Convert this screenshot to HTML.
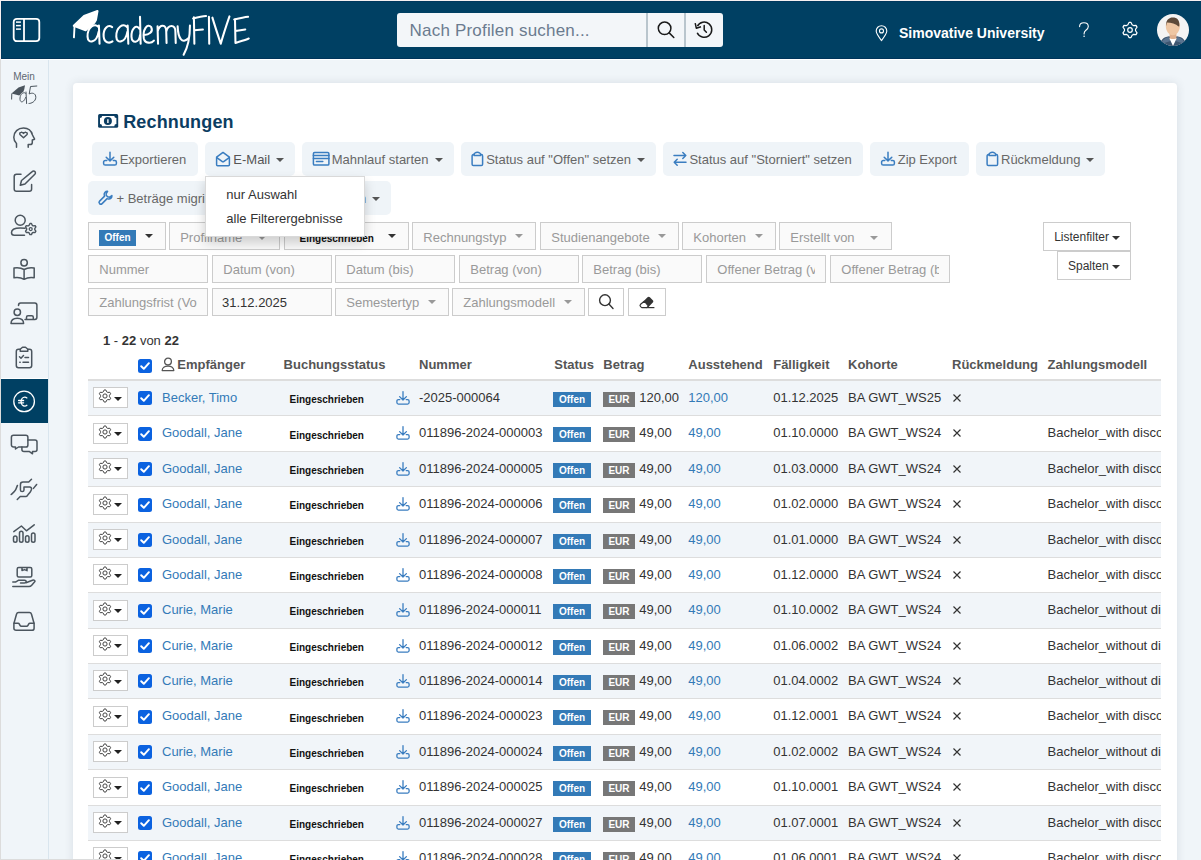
<!DOCTYPE html><html><head><meta charset="utf-8"><style>
*{box-sizing:border-box;margin:0;padding:0}
html,body{width:1201px;height:860px;overflow:hidden;background:#f0f5f9;font-family:"Liberation Sans",sans-serif}
#root{position:relative;width:1201px;height:860px;overflow:hidden;background:#f0f5f9}
.t{position:absolute;white-space:pre}
.a{position:absolute}
svg{position:absolute;overflow:visible}
.btn{position:absolute;background:#eff4f8;border-radius:5px;height:34px;top:142px}
.box{position:absolute;border:1px solid #ccc;background:#fafafa}
.caret{position:absolute;width:0;height:0;border-left:3.5px solid transparent;border-right:3.5px solid transparent;border-top:4px solid #999}
.row{position:absolute;left:88px;width:1073px;border-bottom:1px solid #ddd}
.cb{position:absolute;width:14px;height:14px;border-radius:2.5px;background:#0b62e0}
.badge{position:absolute;height:15px;color:#fff;font-weight:700;font-size:10px;line-height:15px;text-align:center}
</style></head><body><div id="root"><div class="a" style="left:0;top:0;width:1201px;height:1px;background:#f6f1f1"></div><div class="a" style="left:0;top:0;width:1px;height:59px;background:#f6f1f1"></div><div class="a" style="left:0;top:59px;width:1px;height:801px;background:#dcdcdc"></div><div class="a" style="left:1px;top:1px;width:1200px;height:58px;background:#004063;border-bottom:1px solid #00345a;border-top:1px solid #00385d;border-left:1px solid #00385d"></div><div class="a" style="left:1px;top:59px;width:1200px;height:1px;background:#fff"></div><svg style="left:12px;top:17px" width="29" height="26" viewBox="0 0 29 26"><rect x="1.7" y="1.8" width="25.6" height="22.4" rx="3.2" fill="none" stroke="#fff" stroke-width="1.8"/><line x1="12" y1="1.8" x2="12" y2="24.2" stroke="#fff" stroke-width="1.8"/><g stroke="#fff" stroke-width="1.5"><line x1="4" y1="5.1" x2="8.9" y2="5.1"/><line x1="4" y1="8.6" x2="8.9" y2="8.6"/><line x1="4" y1="12.1" x2="8.9" y2="12.1"/></g></svg><svg style="left:65px;top:5px" width="190" height="55" viewBox="0 0 1201 348"><g fill="none" stroke="#fff" stroke-width="13" stroke-linecap="round" stroke-linejoin="round">
<path d="M55 132 L120 70 L205 38 L195 95 L185 112 L130 160 Z" fill="#fff"/>
<path d="M60 130 L56 205" stroke="#fff" stroke-width="12" fill="none"/>
<path d="M212 140 C190 110 140 140 142 200 C144 250 200 240 212 170 M214 130 L218 245" />
<path d="M298 140 C270 120 240 150 244 200 C248 240 280 245 300 230" />
<path d="M392 140 C370 110 322 140 324 200 C326 250 382 240 394 170 M396 130 L400 245" />
<path d="M470 150 C450 120 418 150 420 200 C422 250 470 240 474 190 M474 75 L478 245" />
<path d="M500 190 C530 190 560 170 545 140 C520 110 490 160 498 210 C505 245 545 245 562 225" />
<path d="M585 135 L588 245 M586 165 C600 120 640 120 640 170 L642 240 M640 170 C650 120 700 120 698 170 L700 240" />
<path d="M712 135 C715 210 740 250 780 210 M790 130 C790 220 770 280 750 315" />
<path d="M815 78 L818 245 M810 85 C840 78 870 72 892 70 M818 160 L872 155" />
<path d="M910 75 L912 245" />
<path d="M932 80 C950 140 970 200 985 245 C1000 190 1020 130 1040 72" />
<path d="M1075 90 L1078 240 M1070 92 C1100 85 1130 78 1158 75 M1078 165 L1140 155 M1078 240 C1110 230 1140 222 1162 212" />
</g></svg><div class="a" style="left:397px;top:13px;width:326px;height:34px;background:#f3f6f9;border-radius:3px"></div><div class="a" style="left:646px;top:13px;width:2px;height:34px;background:#b9c5cd"></div><div class="a" style="left:684px;top:13px;width:2px;height:34px;background:#b9c5cd"></div><div class="t" style="left:409.60px;top:22.00px;font-size:17px;line-height:17px;font-weight:400;color:#6b7b8f;letter-spacing:0.19px;">Nach Profilen suchen...</div><svg style="left:656px;top:20px" width="20" height="20" viewBox="0 0 20 20"><circle cx="8.6" cy="8.3" r="6.3" fill="none" stroke="#1a1a1a" stroke-width="1.5"/><line x1="13.2" y1="12.9" x2="17.8" y2="17.5" stroke="#1a1a1a" stroke-width="1.5" stroke-linecap="round"/></svg><svg style="left:694px;top:20px" width="20" height="20" viewBox="0 0 20 20"><path d="M3.4 6.2 A7.6 7.6 0 1 1 3.2 12.8" fill="none" stroke="#1a1a1a" stroke-width="1.5"/><path d="M1.2 3.2 L2.3 8.2 L7 6.8" fill="none" stroke="#1a1a1a" stroke-width="1.5" stroke-linejoin="round"/><path d="M10.2 5.4 V10 L12.4 12.2" fill="none" stroke="#1a1a1a" stroke-width="1.5" stroke-linecap="round"/></svg><svg style="left:875px;top:25px" width="14" height="17" viewBox="0 0 14 17"><path d="M6.5 15.5 C3.5 11.5 1.2 8.6 1.2 6 A5.3 5.3 0 0 1 11.8 6 C11.8 8.6 9.5 11.5 6.5 15.5 Z" fill="none" stroke="#fff" stroke-width="1.1"/><circle cx="6.5" cy="5.9" r="2" fill="none" stroke="#fff" stroke-width="1.1"/></svg><div class="t" style="left:899.00px;top:26.00px;font-size:14px;line-height:14px;font-weight:700;color:#fff;">Simovative University</div><svg style="left:1077px;top:21px" width="14" height="18" viewBox="0 0 14 18"><path d="M2.6 5.6 C2.6 3.2 4.4 1.8 6.9 1.8 C9.5 1.8 11.3 3.3 11.3 5.5 C11.3 7.4 10.2 8.3 8.9 9.3 C7.7 10.2 7.1 11 7.1 12.6 V13" fill="none" stroke="#fff" stroke-width="1.1" stroke-linecap="round"/><circle cx="7.1" cy="15.3" r="0.8" fill="#fff"/></svg><svg style="left:1121px;top:21px" width="18" height="18" viewBox="0 0 18 18"><path d="M8.01 1.47 L9.99 1.47 L11.14 3.83 L12.41 4.56 L15.03 4.37 L16.02 6.09 L14.55 8.27 L14.55 9.73 L16.02 11.91 L15.03 13.63 L12.41 13.44 L11.14 14.17 L9.99 16.53 L8.01 16.53 L6.86 14.17 L5.59 13.44 L2.97 13.63 L1.98 11.91 L3.45 9.73 L3.45 8.27 L1.98 6.09 L2.97 4.37 L5.59 4.56 L6.86 3.83 Z" fill="none" stroke="#fff" stroke-width="1.2" stroke-linejoin="round"/><circle cx="9" cy="9" r="2.3" fill="none" stroke="#fff" stroke-width="1.2"/></svg><svg style="left:1157px;top:14px" width="32" height="32" viewBox="0 0 32 32"><defs><clipPath id="av"><circle cx="16" cy="16" r="16"/></clipPath></defs><g clip-path="url(#av)"><rect width="32" height="32" fill="#f4f4f4"/><path d="M2.5 33 C3 26 6 23.2 12 22.2 L16 23.5 L20 22.2 C26 23.2 29 26 29.5 33 Z" fill="#3e5670"/><path d="M4 30 C5 26 7.5 24 11.5 23 L13.5 27 Z M28 30 C27 26 24.5 24 20.5 23 L18.5 27 Z" fill="#5b7591"/><rect x="12.6" y="18.5" width="6.8" height="7" fill="#dfb08e"/><path d="M12.3 24.3 L16 32 L19.7 24.3 C18.5 25.2 13.5 25.2 12.3 24.3 Z" fill="#fff"/><path d="M8.8 12 C8.8 7.5 11.8 5.5 15.8 5.5 C19.8 5.5 22.9 7.5 22.9 12 C22.9 17 19.8 21.2 15.8 21.2 C11.8 21.2 8.8 17 8.8 12 Z" fill="#eec6a3"/><path d="M9 12.3 C8.6 6.2 12 3.6 15.8 3.6 C20 3.6 23 6 22.3 12.2 L21.6 12.4 C19 10 14 8.6 9.8 8.6 Z" fill="#5c4939"/></g></svg><div class="a" style="left:1px;top:60px;width:47px;height:800px;background:#f0f5f9"></div><div class="a" style="left:48px;top:60px;width:1px;height:800px;background:#d9e5ee"></div><div class="t" style="left:13.20px;top:72.00px;font-size:10px;line-height:10px;font-weight:400;color:#5d6770;">Mein</div><svg style="left:10px;top:84px" width="28" height="21" viewBox="0 0 28 21"><path d="M1.5 9.5 L8.5 3.5 L15 1.2 L14.2 5.5 L13.5 7.2 L9.3 11.5 Z" fill="#4b555e"/><path d="M1.8 9.5 L1.6 15.5" stroke="#4b555e" stroke-width="1" fill="none"/><g fill="none" stroke="#4b555e" stroke-width="1" stroke-linecap="round"><path d="M15.8 9.5 C14.5 7.5 10.5 9 10 14 C9.6 19 13.5 19.5 15.6 13.5 M16 8 L16.6 19.5"/><path d="M26.8 2 L20.5 2.5 L19.2 10 C21.5 8.5 26 8.8 25.8 13.5 C25.6 17.5 21.5 19.5 19 19.5"/></g></svg><svg style="left:12px;top:126px" width="24" height="24" viewBox="0 0 24 24"><g fill="none" stroke="#4b555e" stroke-width="1.5" stroke-linecap="round" stroke-linejoin="round"><path d="M4.5 21.2 V17.5 C2.6 15.8 1.8 13.6 1.8 11.2 C1.8 6 6 2 11.5 2 C16.2 2 19.5 5.2 20.5 9 L22.6 13.2 L20.3 14 V16.5 C20.3 17.8 19.4 18.6 18 18.6 H16.2 V21.2"/><path d="M11.5 11.8 L8.2 8.8 C7.3 7.8 7.8 6.4 9 6.2 C10 6 10.9 6.6 11.5 7.4 C12.1 6.6 13 6 14 6.2 C15.2 6.4 15.7 7.8 14.8 8.8 Z"/></g></svg><svg style="left:12px;top:169px" width="24" height="24" viewBox="0 0 24 24"><g fill="none" stroke="#4b555e" stroke-width="1.5" stroke-linecap="round" stroke-linejoin="round"><path d="M9 5.2 H4.5 C3.1 5.2 2.2 6.1 2.2 7.5 V20 C2.2 21.4 3.1 22.3 4.5 22.3 H17.3 C18.7 22.3 19.6 21.4 19.6 20 V15.5"/><path d="M20.2 2.6 C21 1.8 22.2 1.8 22.9 2.6 C23.6 3.3 23.6 4.5 22.8 5.3 L13 15 L8.3 16.2 L9.5 11.5 Z"/></g></svg><svg style="left:10px;top:213px" width="28" height="25" viewBox="0 0 28 25"><g fill="none" stroke="#4b555e" stroke-width="1.5" stroke-linecap="round" stroke-linejoin="round"><circle cx="10.2" cy="7.3" r="5"/><path d="M15 15.3 C13.8 15 12.2 14.9 10.2 14.9 C4.5 14.9 1.5 16.6 1.5 19.5 C1.5 21.2 2.3 22.3 4.2 22.3 H14.5"/></g><path d="M19.97 10.55 L21.43 10.55 L22.27 12.31 L23.20 12.85 L25.14 12.69 L25.87 13.96 L24.76 15.56 L24.76 16.64 L25.87 18.24 L25.14 19.51 L23.20 19.35 L22.27 19.89 L21.43 21.65 L19.97 21.65 L19.13 19.89 L18.20 19.35 L16.26 19.51 L15.53 18.24 L16.64 16.64 L16.64 15.56 L15.53 13.96 L16.26 12.69 L18.20 12.85 L19.13 12.31 Z" fill="none" stroke="#4b555e" stroke-width="1.4" stroke-linejoin="round"/><circle cx="20.7" cy="16.1" r="1.5" fill="none" stroke="#4b555e" stroke-width="1.3"/></svg><svg style="left:12px;top:257px" width="25" height="25" viewBox="0 0 25 25"><g fill="none" stroke="#4b555e" stroke-width="1.5" stroke-linecap="round" stroke-linejoin="round"><circle cx="12.1" cy="5.8" r="3.2"/><path d="M12.1 22.3 C9.5 20.8 5.6 20.3 2 20.8 V11 C5.6 10.5 9.5 11 12.1 12.5 C14.7 11 18.6 10.5 22.2 11 V20.8 C18.6 20.3 14.7 20.8 12.1 22.3 Z M12.1 12.5 V22.3"/></g></svg><svg style="left:9px;top:301px" width="30" height="25" viewBox="0 0 30 25"><g fill="none" stroke="#4b555e" stroke-width="1.5" stroke-linecap="round" stroke-linejoin="round"><path d="M9.5 4.5 C9.5 2.9 10.2 2 11.6 2 H25.8 C27.2 2 27.9 2.9 27.9 4.3 V16.2 C27.9 17.6 27.2 18.4 25.8 18.4 H16"/><path d="M17.5 18.3 V16.2 C17.5 15.3 18.1 14.8 19 14.8 H22.8 C23.7 14.8 24.3 15.3 24.3 16.2 V18.3"/><circle cx="8.3" cy="11.2" r="3.2"/><path d="M2 22.6 C2 19.2 4.5 17.3 8.3 17.3 C12.1 17.3 14.6 19.2 14.6 22.6 Z"/></g></svg><svg style="left:12px;top:345px" width="24" height="25" viewBox="0 0 24 25"><g fill="none" stroke="#4b555e" stroke-width="1.5" stroke-linecap="round" stroke-linejoin="round"><path d="M8.2 4.2 H6.5 C5.1 4.2 4.3 5 4.3 6.4 V20.6 C4.3 22 5.1 22.7 6.5 22.7 H17.5 C18.9 22.7 19.7 22 19.7 20.6 V6.4 C19.7 5 18.9 4.2 17.5 4.2 H15.8"/><path d="M8.2 6.3 V4.2 L10.5 2.2 H13.5 L15.8 4.2 V6.3 Z"/><path d="M7.5 11.8 L9 13.2 L11.5 10.6 M13 12.5 H16.5 M7.8 17.2 H8.2 M11 17.2 H16.5"/></g></svg><div class="a" style="left:1px;top:378px;width:47px;height:1px;background:#fff"></div><div class="a" style="left:1px;top:379px;width:47px;height:44px;background:#004063"></div><svg style="left:12px;top:389px" width="25" height="25" viewBox="0 0 25 25"><circle cx="12.1" cy="12.4" r="10.3" fill="none" stroke="#fff" stroke-width="1.3"/><path d="M14.9 8.9 C14.3 8.4 13.6 8.1 12.8 8.1 C10.7 8.1 9.1 10.1 9.1 12.6 C9.1 15.1 10.7 17.1 12.8 17.1 C13.6 17.1 14.3 16.8 14.9 16.3 M6.6 11.5 H11.6 M6.6 13.8 H11.6" fill="none" stroke="#fff" stroke-width="1.3" stroke-linecap="round"/></svg><svg style="left:10px;top:433px" width="29" height="24" viewBox="0 0 29 24"><g fill="none" stroke="#4b555e" stroke-width="1.5" stroke-linecap="round" stroke-linejoin="round"><path d="M3.5 2.3 H15.8 C17 2.3 17.9 3.2 17.9 4.4 V11.9 C17.9 13.1 17 14 15.8 14 H8.5 L5.5 16 V14 H3.5 C2.3 14 1.4 13.1 1.4 11.9 V4.4 C1.4 3.2 2.3 2.3 3.5 2.3 Z"/><path d="M17.9 7 H25 C26.2 7 27 7.8 27 9 V16.6 C27 17.8 26.2 18.6 25 18.6 H22.5 V20.8 L19.5 18.6 H14 C12.8 18.6 11.9 17.8 11.9 16.6 V14"/></g></svg><svg style="left:10px;top:477px" width="28" height="25" viewBox="0 0 28 25"><g fill="none" stroke="#4b555e" stroke-width="1.5" stroke-linecap="round" stroke-linejoin="round"><path d="M1.14 17.53 C3 15.8 4.6 14.6 5.4 13.2 C6.2 11.8 6.8 9.8 7.46 8.44"/><path d="M21.49 2.31 L18.73 5.08 H13 C11.3 5.08 10.43 6 10.43 7.65 V12.98 C10.43 14 11.2 14.6 12.2 14.6 C13.2 14.6 13.98 14 13.98 12.98 V10.02 H19.72 C21 10.1 21.8 11.2 21.49 12.39 C21.2 13.6 20.5 14.5 20.1 15.16 L18.13 17.53 C17.5 18.6 17 19.5 16.16 19.5 H10.23 L7.26 22.47"/><path d="M26.63 7.45 L23.47 11.4"/></g></svg><svg style="left:11px;top:521px" width="26" height="24" viewBox="0 0 26 24"><g fill="none" stroke="#4b555e" stroke-width="1.5" stroke-linecap="round" stroke-linejoin="round"><path d="M2.8 10.6 L10.4 5 L15.4 9.8 L23.2 3.8"/><rect x="2.5" y="15" width="3.5" height="6.2" rx="1.75"/><rect x="8.5" y="10.2" width="3.5" height="11" rx="1.75"/><rect x="14.5" y="14.8" width="3.5" height="6.4" rx="1.75"/><rect x="20.5" y="12" width="3.5" height="9.2" rx="1.75"/></g></svg><svg style="left:11px;top:565px" width="26" height="24" viewBox="0 0 26 24"><g fill="none" stroke="#4b555e" stroke-width="1.5" stroke-linecap="round" stroke-linejoin="round"><rect x="6.2" y="2.5" width="14.6" height="9.4" rx="1.5"/><path d="M11 2.7 V5.6 L13.5 4.6 L16 5.6 V2.7"/><path d="M1.8 17.1 H4.5 L7.7 15.2 H13.5 C14.6 15.2 15.2 15.8 15.2 16.6 C15.2 17.4 14.6 17.9 13.5 17.9 H9.5 M15 17.8 L21.5 15.3 C23 14.8 24.4 15.4 23.9 16.6 L20.7 20.3 C19.9 21.2 19 21.6 18 21.6 H1.8"/></g></svg><svg style="left:11px;top:609px" width="26" height="24" viewBox="0 0 26 24"><g fill="none" stroke="#4b555e" stroke-width="1.5" stroke-linecap="round" stroke-linejoin="round"><path d="M7.6 3.6 H18.4 C19.6 3.6 20.2 4.2 20.5 5.3 L23.1 14.5 V19.2 C23.1 20.6 22.3 21.3 20.9 21.3 H5.1 C3.7 21.3 2.9 20.6 2.9 19.2 V14.5 L5.5 5.3 C5.8 4.2 6.4 3.6 7.6 3.6 Z"/><path d="M3 14.2 H7 C7.7 14.2 8.1 14.6 8.4 15.2 L9 16.4 C9.3 17 9.7 17.3 10.4 17.3 H15.6 C16.3 17.3 16.7 17 17 16.4 L17.6 15.2 C17.9 14.6 18.3 14.2 19 14.2 H23"/></g></svg><div class="a" style="left:73px;top:83px;width:1104px;height:800px;background:#fff;border-radius:4px;box-shadow:0 0 10px rgba(50,60,70,0.12)"></div><svg style="left:97px;top:113px" width="22" height="16" viewBox="0 0 22 16"><rect x="1.1" y="1.1" width="20.1" height="13.7" rx="1.6" fill="#0b3d62"/><path d="M5.1 2.9 H17.3 A2.1 2.1 0 0 0 19.4 5 V11.1 A2.1 2.1 0 0 0 17.3 13.2 H5.1 A2.1 2.1 0 0 0 3 11.1 V5 A2.1 2.1 0 0 0 5.1 2.9 Z" fill="#fff"/><circle cx="10.9" cy="8" r="4" fill="#0b3d62"/><path d="M10.2 6.3 H11.6 V9.9 H10.2 Z" fill="#fff"/></svg><div class="t" style="left:123.20px;top:113.00px;font-size:18px;line-height:18px;font-weight:700;color:#0b3d62;letter-spacing:0.15px;">Rechnungen</div><div class="a" style="left:92px;top:142px;width:106px;height:34px;background:#eff4f8;border-radius:5px"></div><div class="a" style="left:205px;top:142px;width:90px;height:34px;background:#eff4f8;border-radius:5px"></div><div class="a" style="left:302px;top:142px;width:152px;height:34px;background:#eff4f8;border-radius:5px"></div><div class="a" style="left:461px;top:142px;width:195px;height:34px;background:#eff4f8;border-radius:5px"></div><div class="a" style="left:663px;top:142px;width:200px;height:34px;background:#eff4f8;border-radius:5px"></div><div class="a" style="left:870px;top:142px;width:99px;height:34px;background:#eff4f8;border-radius:5px"></div><div class="a" style="left:976px;top:142px;width:129px;height:34px;background:#eff4f8;border-radius:5px"></div><div class="a" style="left:88px;top:181px;width:303px;height:34px;background:#eff4f8;border-radius:5px"></div><svg style="left:101px;top:151px" width="16" height="16" viewBox="0 0 16 16"><g fill="none" stroke="#3a7dc0" stroke-width="1.5" stroke-linecap="round" stroke-linejoin="round"><path d="M9 1.2 V9.8 M5.2 6.2 L9 9.9 L12.8 6.2"/><path d="M5.8 9.5 H4.3 C3.2 9.5 2.6 10.1 2.6 11.1 V12.5 C2.6 13.5 3.2 14.1 4.3 14.1 H13.8 C14.8 14.1 15.4 13.5 15.4 12.5 V11.1 C15.4 10.1 14.8 9.5 13.8 9.5 H12.3"/></g></svg><div class="t" style="left:119.70px;top:153.00px;font-size:13px;line-height:13px;font-weight:400;color:#676767;">Exportieren</div><svg style="left:215px;top:151px" width="16" height="16" viewBox="0 0 16 16"><g fill="none" stroke="#3a7dc0" stroke-width="1.5" stroke-linecap="round" stroke-linejoin="round"><path d="M1.6 6.2 L8 1.4 L14.4 6.2 V13.8 C14.4 14.4 14 14.8 13.4 14.8 H2.6 C2 14.8 1.6 14.4 1.6 13.8 Z"/><path d="M1.8 6.6 L7 10.4 C7.6 10.9 8.4 10.9 9 10.4 L14.2 6.6"/></g></svg><div class="t" style="left:233.30px;top:153.00px;font-size:13px;line-height:13px;font-weight:400;color:#555;">E-Mail</div><svg style="left:276px;top:158px" width="8" height="4" viewBox="0 0 8 4"><path d="M0 0 H8 L4.0 4 Z" fill="#555"/></svg><svg style="left:312px;top:151px" width="18" height="16" viewBox="0 0 18 16"><g fill="none" stroke="#3a7dc0" stroke-width="1.5" stroke-linecap="round" stroke-linejoin="round"><rect x="1.4" y="1.6" width="15.5" height="12.5" rx="1.2"/><path d="M1.4 4.5 H16.9 M1.4 7.4 H16.9 M4.4 10.6 H10.8"/></g></svg><div class="t" style="left:331.70px;top:153.00px;font-size:13px;line-height:13px;font-weight:400;color:#676767;">Mahnlauf starten</div><svg style="left:435px;top:158px" width="8" height="4" viewBox="0 0 8 4"><path d="M0 0 H8 L4.0 4 Z" fill="#555"/></svg><svg style="left:471px;top:151px" width="13" height="16" viewBox="0 0 13 16"><g fill="none" stroke="#3a7dc0" stroke-width="1.5" stroke-linecap="round" stroke-linejoin="round"><path d="M3 3.6 H2.4 C1.6 3.6 1.1 4.1 1.1 4.9 V13.2 C1.1 14 1.6 14.5 2.4 14.5 H10.3 C11.1 14.5 11.6 14 11.6 13.2 V4.9 C11.6 4.1 11.1 3.6 10.3 3.6 H9.7"/><path d="M3 3.6 C3 2.6 4.5 1.3 6.35 1.3 C8.2 1.3 9.7 2.6 9.7 3.6 V4.6 H3 Z"/></g></svg><div class="t" style="left:486.20px;top:153.00px;font-size:13px;line-height:13px;font-weight:400;color:#676767;">Status auf "Offen" setzen</div><svg style="left:637px;top:158px" width="8" height="4" viewBox="0 0 8 4"><path d="M0 0 H8 L4.0 4 Z" fill="#555"/></svg><svg style="left:672px;top:151px" width="16" height="16" viewBox="0 0 16 16"><g fill="none" stroke="#3a7dc0" stroke-width="1.5" stroke-linecap="round" stroke-linejoin="round"><path d="M2 4.5 H13.8 M10.8 1.5 L13.8 4.5 L10.8 7.5"/><path d="M14 11.3 H2.2 M5.2 8.3 L2.2 11.3 L5.2 14.3"/></g></svg><div class="t" style="left:689.40px;top:153.00px;font-size:13px;line-height:13px;font-weight:400;color:#676767;">Status auf "Storniert" setzen</div><svg style="left:879px;top:151px" width="16" height="16" viewBox="0 0 16 16"><g fill="none" stroke="#3a7dc0" stroke-width="1.5" stroke-linecap="round" stroke-linejoin="round"><path d="M9 1.2 V9.8 M5.2 6.2 L9 9.9 L12.8 6.2"/><path d="M5.8 9.5 H4.3 C3.2 9.5 2.6 10.1 2.6 11.1 V12.5 C2.6 13.5 3.2 14.1 4.3 14.1 H13.8 C14.8 14.1 15.4 13.5 15.4 12.5 V11.1 C15.4 10.1 14.8 9.5 13.8 9.5 H12.3"/></g></svg><div class="t" style="left:897.70px;top:153.00px;font-size:13px;line-height:13px;font-weight:400;color:#676767;">Zip Export</div><svg style="left:986px;top:151px" width="13" height="16" viewBox="0 0 13 16"><g fill="none" stroke="#3a7dc0" stroke-width="1.5" stroke-linecap="round" stroke-linejoin="round"><path d="M3 3.6 H2.4 C1.6 3.6 1.1 4.1 1.1 4.9 V13.2 C1.1 14 1.6 14.5 2.4 14.5 H10.3 C11.1 14.5 11.6 14 11.6 13.2 V4.9 C11.6 4.1 11.1 3.6 10.3 3.6 H9.7"/><path d="M3 3.6 C3 2.6 4.5 1.3 6.35 1.3 C8.2 1.3 9.7 2.6 9.7 3.6 V4.6 H3 Z"/></g></svg><div class="t" style="left:1001.00px;top:153.00px;font-size:13px;line-height:13px;font-weight:400;color:#676767;">Rückmeldung</div><svg style="left:1086px;top:158px" width="8" height="4" viewBox="0 0 8 4"><path d="M0 0 H8 L4.0 4 Z" fill="#555"/></svg><svg style="left:98px;top:190px" width="16" height="16" viewBox="0 0 16 16"><g fill="none" stroke="#3a7dc0" stroke-width="1.5" stroke-linecap="round" stroke-linejoin="round"><path d="M9.6 1.3 C7.6 1 5.9 2.8 6.2 4.8 C6.3 5.3 6.4 5.7 6.6 6.1 L1.6 11.1 C0.9 11.8 0.9 12.9 1.6 13.6 C2.3 14.3 3.4 14.3 4.1 13.6 L9.1 8.6 C9.5 8.8 9.9 8.9 10.4 9 C12.4 9.3 14.2 7.6 13.9 5.6 L11.6 7.2 L9.6 6.8 L8.2 5.3 L8.2 3.6 Z"/></g></svg><div class="t" style="left:116.50px;top:192.00px;font-size:13px;line-height:13px;font-weight:400;color:#676767;">+ Beträge migrieren</div><div class="t" style="left:359.00px;top:192.00px;font-size:13px;line-height:13px;font-weight:400;color:#676767;">n</div><svg style="left:372px;top:197px" width="8" height="4" viewBox="0 0 8 4"><path d="M0 0 H8 L4.0 4 Z" fill="#555"/></svg><div class="a" style="left:88px;top:222px;width:78px;height:28px;border:1px solid #ccc;background:#fafafa"></div><div class="badge" style="left:99px;top:230px;width:37px;height:16px;background:#337ab7;line-height:16px">Offen</div><svg style="left:145px;top:234px" width="8" height="4" viewBox="0 0 8 4"><path d="M0 0 H8 L4.0 4 Z" fill="#333"/></svg><div class="a" style="left:169px;top:222px;width:111px;height:28px;border:1px solid #ccc;background:#fafafa"></div><div class="t" style="left:180.20px;top:231.00px;font-size:13px;line-height:13px;font-weight:400;color:#999;">Profilname</div><svg style="left:258px;top:236px" width="8" height="4" viewBox="0 0 8 4"><path d="M0 0 H8 L4.0 4 Z" fill="#999"/></svg><div class="a" style="left:284px;top:222px;width:125px;height:28px;border:1px solid #ccc;background:#fafafa"></div><div class="t" style="left:299.50px;top:234.00px;font-size:10px;line-height:10px;font-weight:700;color:#111;">Eingeschrieben</div><svg style="left:388px;top:234px" width="8" height="4" viewBox="0 0 8 4"><path d="M0 0 H8 L4.0 4 Z" fill="#333"/></svg><div class="a" style="left:412px;top:222px;width:124px;height:28px;border:1px solid #ccc;background:#fafafa"></div><div class="t" style="left:423.30px;top:231.00px;font-size:13px;line-height:13px;font-weight:400;color:#999;">Rechnungstyp</div><svg style="left:515px;top:234px" width="8" height="4" viewBox="0 0 8 4"><path d="M0 0 H8 L4.0 4 Z" fill="#999"/></svg><div class="a" style="left:540px;top:222px;width:139px;height:28px;border:1px solid #ccc;background:#fafafa"></div><div class="t" style="left:551.30px;top:231.00px;font-size:13px;line-height:13px;font-weight:400;color:#999;">Studienangebote</div><svg style="left:658px;top:234px" width="8" height="4" viewBox="0 0 8 4"><path d="M0 0 H8 L4.0 4 Z" fill="#999"/></svg><div class="a" style="left:682px;top:222px;width:94px;height:28px;border:1px solid #ccc;background:#fafafa"></div><div class="t" style="left:693.30px;top:231.00px;font-size:13px;line-height:13px;font-weight:400;color:#999;">Kohorten</div><svg style="left:755px;top:234px" width="8" height="4" viewBox="0 0 8 4"><path d="M0 0 H8 L4.0 4 Z" fill="#999"/></svg><div class="a" style="left:779px;top:222px;width:113px;height:28px;border:1px solid #ccc;background:#fafafa"></div><div class="t" style="left:790.30px;top:231.00px;font-size:13px;line-height:13px;font-weight:400;color:#999;">Erstellt von</div><svg style="left:870px;top:236px" width="8" height="4" viewBox="0 0 8 4"><path d="M0 0 H8 L4.0 4 Z" fill="#999"/></svg><div class="a" style="left:88px;top:255px;width:120px;height:28px;border:1px solid #ccc;background:#fafafa"></div><div class="a" style="left:89px;top:256px;width:107.5px;height:25px;overflow:hidden"><div class="t" style="left:10.3px;top:7px;font-size:13px;line-height:13px;color:#999">Nummer</div></div><div class="a" style="left:212px;top:255px;width:120px;height:28px;border:1px solid #ccc;background:#fafafa"></div><div class="a" style="left:213px;top:256px;width:107.5px;height:25px;overflow:hidden"><div class="t" style="left:10.3px;top:7px;font-size:13px;line-height:13px;color:#999">Datum (von)</div></div><div class="a" style="left:335px;top:255px;width:120px;height:28px;border:1px solid #ccc;background:#fafafa"></div><div class="a" style="left:336px;top:256px;width:107.5px;height:25px;overflow:hidden"><div class="t" style="left:10.3px;top:7px;font-size:13px;line-height:13px;color:#999">Datum (bis)</div></div><div class="a" style="left:459px;top:255px;width:120px;height:28px;border:1px solid #ccc;background:#fafafa"></div><div class="a" style="left:460px;top:256px;width:107.5px;height:25px;overflow:hidden"><div class="t" style="left:10.3px;top:7px;font-size:13px;line-height:13px;color:#999">Betrag (von)</div></div><div class="a" style="left:582px;top:255px;width:120px;height:28px;border:1px solid #ccc;background:#fafafa"></div><div class="a" style="left:583px;top:256px;width:107.5px;height:25px;overflow:hidden"><div class="t" style="left:10.3px;top:7px;font-size:13px;line-height:13px;color:#999">Betrag (bis)</div></div><div class="a" style="left:706px;top:255px;width:120px;height:28px;border:1px solid #ccc;background:#fafafa"></div><div class="a" style="left:707px;top:256px;width:107.5px;height:25px;overflow:hidden"><div class="t" style="left:10.3px;top:7px;font-size:13px;line-height:13px;color:#999">Offener Betrag (v</div></div><div class="a" style="left:830px;top:255px;width:120px;height:28px;border:1px solid #ccc;background:#fafafa"></div><div class="a" style="left:831px;top:256px;width:107.5px;height:25px;overflow:hidden"><div class="t" style="left:10.3px;top:7px;font-size:13px;line-height:13px;color:#999">Offener Betrag (b</div></div><div class="a" style="left:88px;top:288px;width:120px;height:28px;border:1px solid #ccc;background:#fafafa"></div><div class="a" style="left:89px;top:289px;width:107.5px;height:25px;overflow:hidden"><div class="t" style="left:10.3px;top:7px;font-size:13px;line-height:13px;color:#999">Zahlungsfrist (Von)</div></div><div class="a" style="left:212px;top:288px;width:120px;height:28px;border:1px solid #ccc;background:#fafafa"></div><div class="t" style="left:222.00px;top:296.00px;font-size:13px;line-height:13px;font-weight:400;color:#333;">31.12.2025</div><div class="a" style="left:335px;top:288px;width:114px;height:28px;border:1px solid #ccc;background:#fafafa"></div><div class="t" style="left:346.30px;top:296.00px;font-size:13px;line-height:13px;font-weight:400;color:#999;">Semestertyp</div><svg style="left:428px;top:300px" width="8" height="4" viewBox="0 0 8 4"><path d="M0 0 H8 L4.0 4 Z" fill="#999"/></svg><div class="a" style="left:452px;top:288px;width:133px;height:28px;border:1px solid #ccc;background:#fafafa"></div><div class="t" style="left:463.30px;top:296.00px;font-size:13px;line-height:13px;font-weight:400;color:#999;">Zahlungsmodell</div><svg style="left:564px;top:300px" width="8" height="4" viewBox="0 0 8 4"><path d="M0 0 H8 L4.0 4 Z" fill="#999"/></svg><div class="a" style="left:588px;top:288px;width:36px;height:28px;border:1px solid #ccc;background:#fff"></div><svg style="left:597px;top:292px" width="18" height="18" viewBox="0 0 18 18"><circle cx="8" cy="8.2" r="5.4" fill="none" stroke="#333" stroke-width="1.4"/><line x1="11.9" y1="12.1" x2="16" y2="16.4" stroke="#333" stroke-width="1.4" stroke-linecap="round"/></svg><div class="a" style="left:628px;top:288px;width:38px;height:28px;border:1px solid #ccc;background:#fff"></div><svg style="left:638px;top:294px" width="18" height="16" viewBox="0 0 18 16"><path d="M2.6 10.2 L9.5 3.3 C10.2 2.6 11.2 2.6 11.9 3.3 L14.8 6.2 C15.5 6.9 15.5 7.9 14.8 8.6 L10.5 12.9" fill="#333"/><path d="M2.6 10.2 C1.9 10.9 1.9 11.9 2.6 12.6 L3.8 13.6 H8.8 L10.5 12 L6.3 7.2 Z" fill="#fff" stroke="#333" stroke-width="1.2" stroke-linejoin="round"/><path d="M8.5 13.6 H16.4" stroke="#333" stroke-width="1.2"/></svg><div class="a" style="left:1043px;top:222px;width:88px;height:29px;border:1px solid #ccc;background:#fff"></div><div class="t" style="left:1054.20px;top:231.00px;font-size:12px;line-height:12px;font-weight:400;color:#333;">Listenfilter</div><svg style="left:1112px;top:236px" width="8" height="4" viewBox="0 0 8 4"><path d="M0 0 H8 L4.0 4 Z" fill="#333"/></svg><div class="a" style="left:1057px;top:251px;width:74px;height:29px;border:1px solid #ccc;background:#fff"></div><div class="t" style="left:1068.00px;top:260.00px;font-size:12px;line-height:12px;font-weight:400;color:#333;">Spalten</div><svg style="left:1112px;top:265px" width="8" height="4" viewBox="0 0 8 4"><path d="M0 0 H8 L4.0 4 Z" fill="#333"/></svg><div class="t" style="left:103px;top:334px;font-size:13px;line-height:13px;color:#333"><b>1</b> - <b>22</b> von <b>22</b></div><svg style="left:138px;top:359px" width="14" height="14" viewBox="0 0 14 14"><rect width="14" height="14" rx="2.5" fill="#0b62e0"/><path d="M3.2 7.2 L5.8 9.8 L10.9 4.2" fill="none" stroke="#fff" stroke-width="2" stroke-linecap="round" stroke-linejoin="round"/></svg><svg style="left:161px;top:357px" width="14" height="15" viewBox="0 0 14 15"><circle cx="7" cy="4.6" r="3.4" fill="none" stroke="#555" stroke-width="1.3"/><path d="M1.2 13.6 C1.2 10.4 3.6 9.2 7 9.2 C10.4 9.2 12.8 10.4 12.8 13.6 Z" fill="none" stroke="#555" stroke-width="1.3" stroke-linejoin="round"/></svg><div class="t" style="left:177.30px;top:358.00px;font-size:13px;line-height:13px;font-weight:700;color:#555;">Empfänger</div><div class="t" style="left:283.60px;top:358.00px;font-size:13px;line-height:13px;font-weight:700;color:#555;">Buchungsstatus</div><div class="t" style="left:419.00px;top:358.00px;font-size:13px;line-height:13px;font-weight:700;color:#555;">Nummer</div><div class="t" style="left:554.30px;top:358.00px;font-size:13px;line-height:13px;font-weight:700;color:#555;">Status</div><div class="t" style="left:603.30px;top:358.00px;font-size:13px;line-height:13px;font-weight:700;color:#555;">Betrag</div><div class="t" style="left:688.30px;top:358.00px;font-size:13px;line-height:13px;font-weight:700;color:#555;">Ausstehend</div><div class="t" style="left:773.20px;top:358.00px;font-size:13px;line-height:13px;font-weight:700;color:#555;">Fälligkeit</div><div class="t" style="left:848.00px;top:358.00px;font-size:13px;line-height:13px;font-weight:700;color:#555;">Kohorte</div><div class="t" style="left:952.00px;top:358.00px;font-size:13px;line-height:13px;font-weight:700;color:#555;">Rückmeldung</div><div class="t" style="left:1047.50px;top:358.00px;font-size:13px;line-height:13px;font-weight:700;color:#555;">Zahlungsmodell</div><div class="a" style="left:88px;top:379px;width:1073px;height:2px;background:#ddd"></div><div class="a" style="left:88px;top:381px;width:1073px;height:479px;overflow:hidden"><div class="a" style="left:0;top:0.000px;width:1073px;height:35.380px;background:#f1f5f9;border-bottom:1px solid #ddd"></div><div class="a" style="left:5px;top:6.450px;width:35px;height:21px;border:1px solid #ccc;background:#fff"></div><svg style="left:10px;top:8.400px" width="14" height="14" viewBox="0 0 14 14"><path d="M6.20 0.95 L7.80 0.95 L8.72 2.84 L9.74 3.43 L11.84 3.29 L12.64 4.67 L11.46 6.41 L11.46 7.59 L12.64 9.33 L11.84 10.71 L9.74 10.57 L8.72 11.16 L7.80 13.05 L6.20 13.05 L5.28 11.16 L4.26 10.57 L2.16 10.71 L1.36 9.33 L2.54 7.59 L2.54 6.41 L1.36 4.67 L2.16 3.29 L4.26 3.43 L5.28 2.84 Z" fill="none" stroke="#3a3a3a" stroke-width="0.95" stroke-linejoin="round"/><circle cx="7" cy="7" r="2.1" fill="none" stroke="#3a3a3a" stroke-width="0.95"/></svg><svg style="left:26px;top:15.600px" width="8" height="4" viewBox="0 0 8 4"><path d="M0 0 H8 L4 4 Z" fill="#222"/></svg><svg style="left:50px;top:10.450px" width="14" height="14" viewBox="0 0 14 14"><rect width="14" height="14" rx="2.5" fill="#0b62e0"/><path d="M3.2 7.2 L5.8 9.8 L10.9 4.2" fill="none" stroke="#fff" stroke-width="2" stroke-linecap="round" stroke-linejoin="round"/></svg><div class="t" style="left:74.00px;top:10.000px;font-size:13px;line-height:13px;font-weight:400;color:#337ab7;">Becker, Timo</div><div class="t" style="left:201.50px;top:14.200px;font-size:10px;line-height:10px;font-weight:700;color:#111;">Eingeschrieben</div><svg style="left:306px;top:9.000px" width="16" height="16" viewBox="0 0 16 16"><g fill="none" stroke="#3a7dc0" stroke-width="1.3" stroke-linecap="round" stroke-linejoin="round"><path d="M9 1.6 V10 M5.6 6.6 L9 10 L12.4 6.6"/><path d="M5.8 9.6 H4.4 C3.5 9.6 2.9 10.2 2.9 11.1 V12.6 C2.9 13.5 3.5 14.1 4.4 14.1 H13.6 C14.5 14.1 15.1 13.5 15.1 12.6 V11.1 C15.1 10.2 14.5 9.6 13.6 9.6 H12.2"/></g></svg><div class="t" style="left:331.00px;top:10.000px;font-size:13px;line-height:13px;font-weight:400;color:#333;">-2025-000064</div><div class="badge" style="left:465px;top:11.000px;width:38px;background:#337ab7;line-height:16px">Offen</div><div class="badge" style="left:515px;top:11.000px;width:32px;background:#777;line-height:16px">EUR</div><div class="t" style="left:551.30px;top:10.000px;font-size:13px;line-height:13px;font-weight:400;color:#333;">120,00</div><div class="t" style="left:600.30px;top:10.000px;font-size:13px;line-height:13px;font-weight:400;color:#337ab7;">120,00</div><div class="t" style="left:685.20px;top:10.000px;font-size:13px;line-height:13px;font-weight:400;color:#333;">01.12.2025</div><div class="t" style="left:760.00px;top:10.000px;font-size:13px;line-height:13px;font-weight:400;color:#333;">BA GWT_WS25</div><svg style="left:864px;top:12.000px" width="10" height="10" viewBox="0 0 10 10"><path d="M1.5 1.5 L8.5 8.5 M8.5 1.5 L1.5 8.5" stroke="#333" stroke-width="1.15"/></svg><div class="a" style="left:0;top:35.380px;width:1073px;height:35.380px;background:#fff;border-bottom:1px solid #ddd"></div><div class="a" style="left:5px;top:41.830px;width:35px;height:21px;border:1px solid #ccc;background:#fff"></div><svg style="left:10px;top:43.780px" width="14" height="14" viewBox="0 0 14 14"><path d="M6.20 0.95 L7.80 0.95 L8.72 2.84 L9.74 3.43 L11.84 3.29 L12.64 4.67 L11.46 6.41 L11.46 7.59 L12.64 9.33 L11.84 10.71 L9.74 10.57 L8.72 11.16 L7.80 13.05 L6.20 13.05 L5.28 11.16 L4.26 10.57 L2.16 10.71 L1.36 9.33 L2.54 7.59 L2.54 6.41 L1.36 4.67 L2.16 3.29 L4.26 3.43 L5.28 2.84 Z" fill="none" stroke="#3a3a3a" stroke-width="0.95" stroke-linejoin="round"/><circle cx="7" cy="7" r="2.1" fill="none" stroke="#3a3a3a" stroke-width="0.95"/></svg><svg style="left:26px;top:50.980px" width="8" height="4" viewBox="0 0 8 4"><path d="M0 0 H8 L4 4 Z" fill="#222"/></svg><svg style="left:50px;top:45.830px" width="14" height="14" viewBox="0 0 14 14"><rect width="14" height="14" rx="2.5" fill="#0b62e0"/><path d="M3.2 7.2 L5.8 9.8 L10.9 4.2" fill="none" stroke="#fff" stroke-width="2" stroke-linecap="round" stroke-linejoin="round"/></svg><div class="t" style="left:74.00px;top:45.380px;font-size:13px;line-height:13px;font-weight:400;color:#337ab7;">Goodall, Jane</div><div class="t" style="left:201.50px;top:49.580px;font-size:10px;line-height:10px;font-weight:700;color:#111;">Eingeschrieben</div><svg style="left:306px;top:44.380px" width="16" height="16" viewBox="0 0 16 16"><g fill="none" stroke="#3a7dc0" stroke-width="1.3" stroke-linecap="round" stroke-linejoin="round"><path d="M9 1.6 V10 M5.6 6.6 L9 10 L12.4 6.6"/><path d="M5.8 9.6 H4.4 C3.5 9.6 2.9 10.2 2.9 11.1 V12.6 C2.9 13.5 3.5 14.1 4.4 14.1 H13.6 C14.5 14.1 15.1 13.5 15.1 12.6 V11.1 C15.1 10.2 14.5 9.6 13.6 9.6 H12.2"/></g></svg><div class="t" style="left:331.00px;top:45.380px;font-size:13px;line-height:13px;font-weight:400;color:#333;">011896-2024-000003</div><div class="badge" style="left:465px;top:46.380px;width:38px;background:#337ab7;line-height:16px">Offen</div><div class="badge" style="left:515px;top:46.380px;width:32px;background:#777;line-height:16px">EUR</div><div class="t" style="left:551.30px;top:45.380px;font-size:13px;line-height:13px;font-weight:400;color:#333;">49,00</div><div class="t" style="left:600.30px;top:45.380px;font-size:13px;line-height:13px;font-weight:400;color:#337ab7;">49,00</div><div class="t" style="left:685.20px;top:45.380px;font-size:13px;line-height:13px;font-weight:400;color:#333;">01.10.0000</div><div class="t" style="left:760.00px;top:45.380px;font-size:13px;line-height:13px;font-weight:400;color:#333;">BA GWT_WS24</div><svg style="left:864px;top:47.380px" width="10" height="10" viewBox="0 0 10 10"><path d="M1.5 1.5 L8.5 8.5 M8.5 1.5 L1.5 8.5" stroke="#333" stroke-width="1.15"/></svg><div class="t" style="left:959.50px;top:45.380px;font-size:13px;line-height:13px;font-weight:400;color:#333;">Bachelor_with discount</div><div class="a" style="left:0;top:70.760px;width:1073px;height:35.380px;background:#f1f5f9;border-bottom:1px solid #ddd"></div><div class="a" style="left:5px;top:77.210px;width:35px;height:21px;border:1px solid #ccc;background:#fff"></div><svg style="left:10px;top:79.160px" width="14" height="14" viewBox="0 0 14 14"><path d="M6.20 0.95 L7.80 0.95 L8.72 2.84 L9.74 3.43 L11.84 3.29 L12.64 4.67 L11.46 6.41 L11.46 7.59 L12.64 9.33 L11.84 10.71 L9.74 10.57 L8.72 11.16 L7.80 13.05 L6.20 13.05 L5.28 11.16 L4.26 10.57 L2.16 10.71 L1.36 9.33 L2.54 7.59 L2.54 6.41 L1.36 4.67 L2.16 3.29 L4.26 3.43 L5.28 2.84 Z" fill="none" stroke="#3a3a3a" stroke-width="0.95" stroke-linejoin="round"/><circle cx="7" cy="7" r="2.1" fill="none" stroke="#3a3a3a" stroke-width="0.95"/></svg><svg style="left:26px;top:86.360px" width="8" height="4" viewBox="0 0 8 4"><path d="M0 0 H8 L4 4 Z" fill="#222"/></svg><svg style="left:50px;top:81.210px" width="14" height="14" viewBox="0 0 14 14"><rect width="14" height="14" rx="2.5" fill="#0b62e0"/><path d="M3.2 7.2 L5.8 9.8 L10.9 4.2" fill="none" stroke="#fff" stroke-width="2" stroke-linecap="round" stroke-linejoin="round"/></svg><div class="t" style="left:74.00px;top:80.760px;font-size:13px;line-height:13px;font-weight:400;color:#337ab7;">Goodall, Jane</div><div class="t" style="left:201.50px;top:84.960px;font-size:10px;line-height:10px;font-weight:700;color:#111;">Eingeschrieben</div><svg style="left:306px;top:79.760px" width="16" height="16" viewBox="0 0 16 16"><g fill="none" stroke="#3a7dc0" stroke-width="1.3" stroke-linecap="round" stroke-linejoin="round"><path d="M9 1.6 V10 M5.6 6.6 L9 10 L12.4 6.6"/><path d="M5.8 9.6 H4.4 C3.5 9.6 2.9 10.2 2.9 11.1 V12.6 C2.9 13.5 3.5 14.1 4.4 14.1 H13.6 C14.5 14.1 15.1 13.5 15.1 12.6 V11.1 C15.1 10.2 14.5 9.6 13.6 9.6 H12.2"/></g></svg><div class="t" style="left:331.00px;top:80.760px;font-size:13px;line-height:13px;font-weight:400;color:#333;">011896-2024-000005</div><div class="badge" style="left:465px;top:81.760px;width:38px;background:#337ab7;line-height:16px">Offen</div><div class="badge" style="left:515px;top:81.760px;width:32px;background:#777;line-height:16px">EUR</div><div class="t" style="left:551.30px;top:80.760px;font-size:13px;line-height:13px;font-weight:400;color:#333;">49,00</div><div class="t" style="left:600.30px;top:80.760px;font-size:13px;line-height:13px;font-weight:400;color:#337ab7;">49,00</div><div class="t" style="left:685.20px;top:80.760px;font-size:13px;line-height:13px;font-weight:400;color:#333;">01.03.0000</div><div class="t" style="left:760.00px;top:80.760px;font-size:13px;line-height:13px;font-weight:400;color:#333;">BA GWT_WS24</div><svg style="left:864px;top:82.760px" width="10" height="10" viewBox="0 0 10 10"><path d="M1.5 1.5 L8.5 8.5 M8.5 1.5 L1.5 8.5" stroke="#333" stroke-width="1.15"/></svg><div class="t" style="left:959.50px;top:80.760px;font-size:13px;line-height:13px;font-weight:400;color:#333;">Bachelor_with discount</div><div class="a" style="left:0;top:106.140px;width:1073px;height:35.380px;background:#fff;border-bottom:1px solid #ddd"></div><div class="a" style="left:5px;top:112.590px;width:35px;height:21px;border:1px solid #ccc;background:#fff"></div><svg style="left:10px;top:114.540px" width="14" height="14" viewBox="0 0 14 14"><path d="M6.20 0.95 L7.80 0.95 L8.72 2.84 L9.74 3.43 L11.84 3.29 L12.64 4.67 L11.46 6.41 L11.46 7.59 L12.64 9.33 L11.84 10.71 L9.74 10.57 L8.72 11.16 L7.80 13.05 L6.20 13.05 L5.28 11.16 L4.26 10.57 L2.16 10.71 L1.36 9.33 L2.54 7.59 L2.54 6.41 L1.36 4.67 L2.16 3.29 L4.26 3.43 L5.28 2.84 Z" fill="none" stroke="#3a3a3a" stroke-width="0.95" stroke-linejoin="round"/><circle cx="7" cy="7" r="2.1" fill="none" stroke="#3a3a3a" stroke-width="0.95"/></svg><svg style="left:26px;top:121.740px" width="8" height="4" viewBox="0 0 8 4"><path d="M0 0 H8 L4 4 Z" fill="#222"/></svg><svg style="left:50px;top:116.590px" width="14" height="14" viewBox="0 0 14 14"><rect width="14" height="14" rx="2.5" fill="#0b62e0"/><path d="M3.2 7.2 L5.8 9.8 L10.9 4.2" fill="none" stroke="#fff" stroke-width="2" stroke-linecap="round" stroke-linejoin="round"/></svg><div class="t" style="left:74.00px;top:116.140px;font-size:13px;line-height:13px;font-weight:400;color:#337ab7;">Goodall, Jane</div><div class="t" style="left:201.50px;top:120.340px;font-size:10px;line-height:10px;font-weight:700;color:#111;">Eingeschrieben</div><svg style="left:306px;top:115.140px" width="16" height="16" viewBox="0 0 16 16"><g fill="none" stroke="#3a7dc0" stroke-width="1.3" stroke-linecap="round" stroke-linejoin="round"><path d="M9 1.6 V10 M5.6 6.6 L9 10 L12.4 6.6"/><path d="M5.8 9.6 H4.4 C3.5 9.6 2.9 10.2 2.9 11.1 V12.6 C2.9 13.5 3.5 14.1 4.4 14.1 H13.6 C14.5 14.1 15.1 13.5 15.1 12.6 V11.1 C15.1 10.2 14.5 9.6 13.6 9.6 H12.2"/></g></svg><div class="t" style="left:331.00px;top:116.140px;font-size:13px;line-height:13px;font-weight:400;color:#333;">011896-2024-000006</div><div class="badge" style="left:465px;top:117.140px;width:38px;background:#337ab7;line-height:16px">Offen</div><div class="badge" style="left:515px;top:117.140px;width:32px;background:#777;line-height:16px">EUR</div><div class="t" style="left:551.30px;top:116.140px;font-size:13px;line-height:13px;font-weight:400;color:#333;">49,00</div><div class="t" style="left:600.30px;top:116.140px;font-size:13px;line-height:13px;font-weight:400;color:#337ab7;">49,00</div><div class="t" style="left:685.20px;top:116.140px;font-size:13px;line-height:13px;font-weight:400;color:#333;">01.02.0000</div><div class="t" style="left:760.00px;top:116.140px;font-size:13px;line-height:13px;font-weight:400;color:#333;">BA GWT_WS24</div><svg style="left:864px;top:118.140px" width="10" height="10" viewBox="0 0 10 10"><path d="M1.5 1.5 L8.5 8.5 M8.5 1.5 L1.5 8.5" stroke="#333" stroke-width="1.15"/></svg><div class="t" style="left:959.50px;top:116.140px;font-size:13px;line-height:13px;font-weight:400;color:#333;">Bachelor_with discount</div><div class="a" style="left:0;top:141.520px;width:1073px;height:35.380px;background:#f1f5f9;border-bottom:1px solid #ddd"></div><div class="a" style="left:5px;top:147.970px;width:35px;height:21px;border:1px solid #ccc;background:#fff"></div><svg style="left:10px;top:149.920px" width="14" height="14" viewBox="0 0 14 14"><path d="M6.20 0.95 L7.80 0.95 L8.72 2.84 L9.74 3.43 L11.84 3.29 L12.64 4.67 L11.46 6.41 L11.46 7.59 L12.64 9.33 L11.84 10.71 L9.74 10.57 L8.72 11.16 L7.80 13.05 L6.20 13.05 L5.28 11.16 L4.26 10.57 L2.16 10.71 L1.36 9.33 L2.54 7.59 L2.54 6.41 L1.36 4.67 L2.16 3.29 L4.26 3.43 L5.28 2.84 Z" fill="none" stroke="#3a3a3a" stroke-width="0.95" stroke-linejoin="round"/><circle cx="7" cy="7" r="2.1" fill="none" stroke="#3a3a3a" stroke-width="0.95"/></svg><svg style="left:26px;top:157.120px" width="8" height="4" viewBox="0 0 8 4"><path d="M0 0 H8 L4 4 Z" fill="#222"/></svg><svg style="left:50px;top:151.970px" width="14" height="14" viewBox="0 0 14 14"><rect width="14" height="14" rx="2.5" fill="#0b62e0"/><path d="M3.2 7.2 L5.8 9.8 L10.9 4.2" fill="none" stroke="#fff" stroke-width="2" stroke-linecap="round" stroke-linejoin="round"/></svg><div class="t" style="left:74.00px;top:151.520px;font-size:13px;line-height:13px;font-weight:400;color:#337ab7;">Goodall, Jane</div><div class="t" style="left:201.50px;top:155.720px;font-size:10px;line-height:10px;font-weight:700;color:#111;">Eingeschrieben</div><svg style="left:306px;top:150.520px" width="16" height="16" viewBox="0 0 16 16"><g fill="none" stroke="#3a7dc0" stroke-width="1.3" stroke-linecap="round" stroke-linejoin="round"><path d="M9 1.6 V10 M5.6 6.6 L9 10 L12.4 6.6"/><path d="M5.8 9.6 H4.4 C3.5 9.6 2.9 10.2 2.9 11.1 V12.6 C2.9 13.5 3.5 14.1 4.4 14.1 H13.6 C14.5 14.1 15.1 13.5 15.1 12.6 V11.1 C15.1 10.2 14.5 9.6 13.6 9.6 H12.2"/></g></svg><div class="t" style="left:331.00px;top:151.520px;font-size:13px;line-height:13px;font-weight:400;color:#333;">011896-2024-000007</div><div class="badge" style="left:465px;top:152.520px;width:38px;background:#337ab7;line-height:16px">Offen</div><div class="badge" style="left:515px;top:152.520px;width:32px;background:#777;line-height:16px">EUR</div><div class="t" style="left:551.30px;top:151.520px;font-size:13px;line-height:13px;font-weight:400;color:#333;">49,00</div><div class="t" style="left:600.30px;top:151.520px;font-size:13px;line-height:13px;font-weight:400;color:#337ab7;">49,00</div><div class="t" style="left:685.20px;top:151.520px;font-size:13px;line-height:13px;font-weight:400;color:#333;">01.01.0000</div><div class="t" style="left:760.00px;top:151.520px;font-size:13px;line-height:13px;font-weight:400;color:#333;">BA GWT_WS24</div><svg style="left:864px;top:153.520px" width="10" height="10" viewBox="0 0 10 10"><path d="M1.5 1.5 L8.5 8.5 M8.5 1.5 L1.5 8.5" stroke="#333" stroke-width="1.15"/></svg><div class="t" style="left:959.50px;top:151.520px;font-size:13px;line-height:13px;font-weight:400;color:#333;">Bachelor_with discount</div><div class="a" style="left:0;top:176.900px;width:1073px;height:35.380px;background:#fff;border-bottom:1px solid #ddd"></div><div class="a" style="left:5px;top:183.350px;width:35px;height:21px;border:1px solid #ccc;background:#fff"></div><svg style="left:10px;top:185.300px" width="14" height="14" viewBox="0 0 14 14"><path d="M6.20 0.95 L7.80 0.95 L8.72 2.84 L9.74 3.43 L11.84 3.29 L12.64 4.67 L11.46 6.41 L11.46 7.59 L12.64 9.33 L11.84 10.71 L9.74 10.57 L8.72 11.16 L7.80 13.05 L6.20 13.05 L5.28 11.16 L4.26 10.57 L2.16 10.71 L1.36 9.33 L2.54 7.59 L2.54 6.41 L1.36 4.67 L2.16 3.29 L4.26 3.43 L5.28 2.84 Z" fill="none" stroke="#3a3a3a" stroke-width="0.95" stroke-linejoin="round"/><circle cx="7" cy="7" r="2.1" fill="none" stroke="#3a3a3a" stroke-width="0.95"/></svg><svg style="left:26px;top:192.500px" width="8" height="4" viewBox="0 0 8 4"><path d="M0 0 H8 L4 4 Z" fill="#222"/></svg><svg style="left:50px;top:187.350px" width="14" height="14" viewBox="0 0 14 14"><rect width="14" height="14" rx="2.5" fill="#0b62e0"/><path d="M3.2 7.2 L5.8 9.8 L10.9 4.2" fill="none" stroke="#fff" stroke-width="2" stroke-linecap="round" stroke-linejoin="round"/></svg><div class="t" style="left:74.00px;top:186.900px;font-size:13px;line-height:13px;font-weight:400;color:#337ab7;">Goodall, Jane</div><div class="t" style="left:201.50px;top:191.100px;font-size:10px;line-height:10px;font-weight:700;color:#111;">Eingeschrieben</div><svg style="left:306px;top:185.900px" width="16" height="16" viewBox="0 0 16 16"><g fill="none" stroke="#3a7dc0" stroke-width="1.3" stroke-linecap="round" stroke-linejoin="round"><path d="M9 1.6 V10 M5.6 6.6 L9 10 L12.4 6.6"/><path d="M5.8 9.6 H4.4 C3.5 9.6 2.9 10.2 2.9 11.1 V12.6 C2.9 13.5 3.5 14.1 4.4 14.1 H13.6 C14.5 14.1 15.1 13.5 15.1 12.6 V11.1 C15.1 10.2 14.5 9.6 13.6 9.6 H12.2"/></g></svg><div class="t" style="left:331.00px;top:186.900px;font-size:13px;line-height:13px;font-weight:400;color:#333;">011896-2024-000008</div><div class="badge" style="left:465px;top:187.900px;width:38px;background:#337ab7;line-height:16px">Offen</div><div class="badge" style="left:515px;top:187.900px;width:32px;background:#777;line-height:16px">EUR</div><div class="t" style="left:551.30px;top:186.900px;font-size:13px;line-height:13px;font-weight:400;color:#333;">49,00</div><div class="t" style="left:600.30px;top:186.900px;font-size:13px;line-height:13px;font-weight:400;color:#337ab7;">49,00</div><div class="t" style="left:685.20px;top:186.900px;font-size:13px;line-height:13px;font-weight:400;color:#333;">01.12.0000</div><div class="t" style="left:760.00px;top:186.900px;font-size:13px;line-height:13px;font-weight:400;color:#333;">BA GWT_WS24</div><svg style="left:864px;top:188.900px" width="10" height="10" viewBox="0 0 10 10"><path d="M1.5 1.5 L8.5 8.5 M8.5 1.5 L1.5 8.5" stroke="#333" stroke-width="1.15"/></svg><div class="t" style="left:959.50px;top:186.900px;font-size:13px;line-height:13px;font-weight:400;color:#333;">Bachelor_with discount</div><div class="a" style="left:0;top:212.280px;width:1073px;height:35.380px;background:#f1f5f9;border-bottom:1px solid #ddd"></div><div class="a" style="left:5px;top:218.730px;width:35px;height:21px;border:1px solid #ccc;background:#fff"></div><svg style="left:10px;top:220.680px" width="14" height="14" viewBox="0 0 14 14"><path d="M6.20 0.95 L7.80 0.95 L8.72 2.84 L9.74 3.43 L11.84 3.29 L12.64 4.67 L11.46 6.41 L11.46 7.59 L12.64 9.33 L11.84 10.71 L9.74 10.57 L8.72 11.16 L7.80 13.05 L6.20 13.05 L5.28 11.16 L4.26 10.57 L2.16 10.71 L1.36 9.33 L2.54 7.59 L2.54 6.41 L1.36 4.67 L2.16 3.29 L4.26 3.43 L5.28 2.84 Z" fill="none" stroke="#3a3a3a" stroke-width="0.95" stroke-linejoin="round"/><circle cx="7" cy="7" r="2.1" fill="none" stroke="#3a3a3a" stroke-width="0.95"/></svg><svg style="left:26px;top:227.880px" width="8" height="4" viewBox="0 0 8 4"><path d="M0 0 H8 L4 4 Z" fill="#222"/></svg><svg style="left:50px;top:222.730px" width="14" height="14" viewBox="0 0 14 14"><rect width="14" height="14" rx="2.5" fill="#0b62e0"/><path d="M3.2 7.2 L5.8 9.8 L10.9 4.2" fill="none" stroke="#fff" stroke-width="2" stroke-linecap="round" stroke-linejoin="round"/></svg><div class="t" style="left:74.00px;top:222.280px;font-size:13px;line-height:13px;font-weight:400;color:#337ab7;">Curie, Marie</div><div class="t" style="left:201.50px;top:226.480px;font-size:10px;line-height:10px;font-weight:700;color:#111;">Eingeschrieben</div><svg style="left:306px;top:221.280px" width="16" height="16" viewBox="0 0 16 16"><g fill="none" stroke="#3a7dc0" stroke-width="1.3" stroke-linecap="round" stroke-linejoin="round"><path d="M9 1.6 V10 M5.6 6.6 L9 10 L12.4 6.6"/><path d="M5.8 9.6 H4.4 C3.5 9.6 2.9 10.2 2.9 11.1 V12.6 C2.9 13.5 3.5 14.1 4.4 14.1 H13.6 C14.5 14.1 15.1 13.5 15.1 12.6 V11.1 C15.1 10.2 14.5 9.6 13.6 9.6 H12.2"/></g></svg><div class="t" style="left:331.00px;top:222.280px;font-size:13px;line-height:13px;font-weight:400;color:#333;">011896-2024-000011</div><div class="badge" style="left:465px;top:223.280px;width:38px;background:#337ab7;line-height:16px">Offen</div><div class="badge" style="left:515px;top:223.280px;width:32px;background:#777;line-height:16px">EUR</div><div class="t" style="left:551.30px;top:222.280px;font-size:13px;line-height:13px;font-weight:400;color:#333;">49,00</div><div class="t" style="left:600.30px;top:222.280px;font-size:13px;line-height:13px;font-weight:400;color:#337ab7;">49,00</div><div class="t" style="left:685.20px;top:222.280px;font-size:13px;line-height:13px;font-weight:400;color:#333;">01.10.0002</div><div class="t" style="left:760.00px;top:222.280px;font-size:13px;line-height:13px;font-weight:400;color:#333;">BA GWT_WS24</div><svg style="left:864px;top:224.280px" width="10" height="10" viewBox="0 0 10 10"><path d="M1.5 1.5 L8.5 8.5 M8.5 1.5 L1.5 8.5" stroke="#333" stroke-width="1.15"/></svg><div class="t" style="left:959.50px;top:222.280px;font-size:13px;line-height:13px;font-weight:400;color:#333;">Bachelor_without discount</div><div class="a" style="left:0;top:247.660px;width:1073px;height:35.380px;background:#fff;border-bottom:1px solid #ddd"></div><div class="a" style="left:5px;top:254.110px;width:35px;height:21px;border:1px solid #ccc;background:#fff"></div><svg style="left:10px;top:256.060px" width="14" height="14" viewBox="0 0 14 14"><path d="M6.20 0.95 L7.80 0.95 L8.72 2.84 L9.74 3.43 L11.84 3.29 L12.64 4.67 L11.46 6.41 L11.46 7.59 L12.64 9.33 L11.84 10.71 L9.74 10.57 L8.72 11.16 L7.80 13.05 L6.20 13.05 L5.28 11.16 L4.26 10.57 L2.16 10.71 L1.36 9.33 L2.54 7.59 L2.54 6.41 L1.36 4.67 L2.16 3.29 L4.26 3.43 L5.28 2.84 Z" fill="none" stroke="#3a3a3a" stroke-width="0.95" stroke-linejoin="round"/><circle cx="7" cy="7" r="2.1" fill="none" stroke="#3a3a3a" stroke-width="0.95"/></svg><svg style="left:26px;top:263.260px" width="8" height="4" viewBox="0 0 8 4"><path d="M0 0 H8 L4 4 Z" fill="#222"/></svg><svg style="left:50px;top:258.110px" width="14" height="14" viewBox="0 0 14 14"><rect width="14" height="14" rx="2.5" fill="#0b62e0"/><path d="M3.2 7.2 L5.8 9.8 L10.9 4.2" fill="none" stroke="#fff" stroke-width="2" stroke-linecap="round" stroke-linejoin="round"/></svg><div class="t" style="left:74.00px;top:257.660px;font-size:13px;line-height:13px;font-weight:400;color:#337ab7;">Curie, Marie</div><div class="t" style="left:201.50px;top:261.860px;font-size:10px;line-height:10px;font-weight:700;color:#111;">Eingeschrieben</div><svg style="left:306px;top:256.660px" width="16" height="16" viewBox="0 0 16 16"><g fill="none" stroke="#3a7dc0" stroke-width="1.3" stroke-linecap="round" stroke-linejoin="round"><path d="M9 1.6 V10 M5.6 6.6 L9 10 L12.4 6.6"/><path d="M5.8 9.6 H4.4 C3.5 9.6 2.9 10.2 2.9 11.1 V12.6 C2.9 13.5 3.5 14.1 4.4 14.1 H13.6 C14.5 14.1 15.1 13.5 15.1 12.6 V11.1 C15.1 10.2 14.5 9.6 13.6 9.6 H12.2"/></g></svg><div class="t" style="left:331.00px;top:257.660px;font-size:13px;line-height:13px;font-weight:400;color:#333;">011896-2024-000012</div><div class="badge" style="left:465px;top:258.660px;width:38px;background:#337ab7;line-height:16px">Offen</div><div class="badge" style="left:515px;top:258.660px;width:32px;background:#777;line-height:16px">EUR</div><div class="t" style="left:551.30px;top:257.660px;font-size:13px;line-height:13px;font-weight:400;color:#333;">49,00</div><div class="t" style="left:600.30px;top:257.660px;font-size:13px;line-height:13px;font-weight:400;color:#337ab7;">49,00</div><div class="t" style="left:685.20px;top:257.660px;font-size:13px;line-height:13px;font-weight:400;color:#333;">01.06.0002</div><div class="t" style="left:760.00px;top:257.660px;font-size:13px;line-height:13px;font-weight:400;color:#333;">BA GWT_WS24</div><svg style="left:864px;top:259.660px" width="10" height="10" viewBox="0 0 10 10"><path d="M1.5 1.5 L8.5 8.5 M8.5 1.5 L1.5 8.5" stroke="#333" stroke-width="1.15"/></svg><div class="t" style="left:959.50px;top:257.660px;font-size:13px;line-height:13px;font-weight:400;color:#333;">Bachelor_without discount</div><div class="a" style="left:0;top:283.040px;width:1073px;height:35.380px;background:#f1f5f9;border-bottom:1px solid #ddd"></div><div class="a" style="left:5px;top:289.490px;width:35px;height:21px;border:1px solid #ccc;background:#fff"></div><svg style="left:10px;top:291.440px" width="14" height="14" viewBox="0 0 14 14"><path d="M6.20 0.95 L7.80 0.95 L8.72 2.84 L9.74 3.43 L11.84 3.29 L12.64 4.67 L11.46 6.41 L11.46 7.59 L12.64 9.33 L11.84 10.71 L9.74 10.57 L8.72 11.16 L7.80 13.05 L6.20 13.05 L5.28 11.16 L4.26 10.57 L2.16 10.71 L1.36 9.33 L2.54 7.59 L2.54 6.41 L1.36 4.67 L2.16 3.29 L4.26 3.43 L5.28 2.84 Z" fill="none" stroke="#3a3a3a" stroke-width="0.95" stroke-linejoin="round"/><circle cx="7" cy="7" r="2.1" fill="none" stroke="#3a3a3a" stroke-width="0.95"/></svg><svg style="left:26px;top:298.640px" width="8" height="4" viewBox="0 0 8 4"><path d="M0 0 H8 L4 4 Z" fill="#222"/></svg><svg style="left:50px;top:293.490px" width="14" height="14" viewBox="0 0 14 14"><rect width="14" height="14" rx="2.5" fill="#0b62e0"/><path d="M3.2 7.2 L5.8 9.8 L10.9 4.2" fill="none" stroke="#fff" stroke-width="2" stroke-linecap="round" stroke-linejoin="round"/></svg><div class="t" style="left:74.00px;top:293.040px;font-size:13px;line-height:13px;font-weight:400;color:#337ab7;">Curie, Marie</div><div class="t" style="left:201.50px;top:297.240px;font-size:10px;line-height:10px;font-weight:700;color:#111;">Eingeschrieben</div><svg style="left:306px;top:292.040px" width="16" height="16" viewBox="0 0 16 16"><g fill="none" stroke="#3a7dc0" stroke-width="1.3" stroke-linecap="round" stroke-linejoin="round"><path d="M9 1.6 V10 M5.6 6.6 L9 10 L12.4 6.6"/><path d="M5.8 9.6 H4.4 C3.5 9.6 2.9 10.2 2.9 11.1 V12.6 C2.9 13.5 3.5 14.1 4.4 14.1 H13.6 C14.5 14.1 15.1 13.5 15.1 12.6 V11.1 C15.1 10.2 14.5 9.6 13.6 9.6 H12.2"/></g></svg><div class="t" style="left:331.00px;top:293.040px;font-size:13px;line-height:13px;font-weight:400;color:#333;">011896-2024-000014</div><div class="badge" style="left:465px;top:294.040px;width:38px;background:#337ab7;line-height:16px">Offen</div><div class="badge" style="left:515px;top:294.040px;width:32px;background:#777;line-height:16px">EUR</div><div class="t" style="left:551.30px;top:293.040px;font-size:13px;line-height:13px;font-weight:400;color:#333;">49,00</div><div class="t" style="left:600.30px;top:293.040px;font-size:13px;line-height:13px;font-weight:400;color:#337ab7;">49,00</div><div class="t" style="left:685.20px;top:293.040px;font-size:13px;line-height:13px;font-weight:400;color:#333;">01.04.0002</div><div class="t" style="left:760.00px;top:293.040px;font-size:13px;line-height:13px;font-weight:400;color:#333;">BA GWT_WS24</div><svg style="left:864px;top:295.040px" width="10" height="10" viewBox="0 0 10 10"><path d="M1.5 1.5 L8.5 8.5 M8.5 1.5 L1.5 8.5" stroke="#333" stroke-width="1.15"/></svg><div class="t" style="left:959.50px;top:293.040px;font-size:13px;line-height:13px;font-weight:400;color:#333;">Bachelor_without discount</div><div class="a" style="left:0;top:318.420px;width:1073px;height:35.380px;background:#fff;border-bottom:1px solid #ddd"></div><div class="a" style="left:5px;top:324.870px;width:35px;height:21px;border:1px solid #ccc;background:#fff"></div><svg style="left:10px;top:326.820px" width="14" height="14" viewBox="0 0 14 14"><path d="M6.20 0.95 L7.80 0.95 L8.72 2.84 L9.74 3.43 L11.84 3.29 L12.64 4.67 L11.46 6.41 L11.46 7.59 L12.64 9.33 L11.84 10.71 L9.74 10.57 L8.72 11.16 L7.80 13.05 L6.20 13.05 L5.28 11.16 L4.26 10.57 L2.16 10.71 L1.36 9.33 L2.54 7.59 L2.54 6.41 L1.36 4.67 L2.16 3.29 L4.26 3.43 L5.28 2.84 Z" fill="none" stroke="#3a3a3a" stroke-width="0.95" stroke-linejoin="round"/><circle cx="7" cy="7" r="2.1" fill="none" stroke="#3a3a3a" stroke-width="0.95"/></svg><svg style="left:26px;top:334.020px" width="8" height="4" viewBox="0 0 8 4"><path d="M0 0 H8 L4 4 Z" fill="#222"/></svg><svg style="left:50px;top:328.870px" width="14" height="14" viewBox="0 0 14 14"><rect width="14" height="14" rx="2.5" fill="#0b62e0"/><path d="M3.2 7.2 L5.8 9.8 L10.9 4.2" fill="none" stroke="#fff" stroke-width="2" stroke-linecap="round" stroke-linejoin="round"/></svg><div class="t" style="left:74.00px;top:328.420px;font-size:13px;line-height:13px;font-weight:400;color:#337ab7;">Goodall, Jane</div><div class="t" style="left:201.50px;top:332.620px;font-size:10px;line-height:10px;font-weight:700;color:#111;">Eingeschrieben</div><svg style="left:306px;top:327.420px" width="16" height="16" viewBox="0 0 16 16"><g fill="none" stroke="#3a7dc0" stroke-width="1.3" stroke-linecap="round" stroke-linejoin="round"><path d="M9 1.6 V10 M5.6 6.6 L9 10 L12.4 6.6"/><path d="M5.8 9.6 H4.4 C3.5 9.6 2.9 10.2 2.9 11.1 V12.6 C2.9 13.5 3.5 14.1 4.4 14.1 H13.6 C14.5 14.1 15.1 13.5 15.1 12.6 V11.1 C15.1 10.2 14.5 9.6 13.6 9.6 H12.2"/></g></svg><div class="t" style="left:331.00px;top:328.420px;font-size:13px;line-height:13px;font-weight:400;color:#333;">011896-2024-000023</div><div class="badge" style="left:465px;top:329.420px;width:38px;background:#337ab7;line-height:16px">Offen</div><div class="badge" style="left:515px;top:329.420px;width:32px;background:#777;line-height:16px">EUR</div><div class="t" style="left:551.30px;top:328.420px;font-size:13px;line-height:13px;font-weight:400;color:#333;">49,00</div><div class="t" style="left:600.30px;top:328.420px;font-size:13px;line-height:13px;font-weight:400;color:#337ab7;">49,00</div><div class="t" style="left:685.20px;top:328.420px;font-size:13px;line-height:13px;font-weight:400;color:#333;">01.12.0001</div><div class="t" style="left:760.00px;top:328.420px;font-size:13px;line-height:13px;font-weight:400;color:#333;">BA GWT_WS24</div><svg style="left:864px;top:330.420px" width="10" height="10" viewBox="0 0 10 10"><path d="M1.5 1.5 L8.5 8.5 M8.5 1.5 L1.5 8.5" stroke="#333" stroke-width="1.15"/></svg><div class="t" style="left:959.50px;top:328.420px;font-size:13px;line-height:13px;font-weight:400;color:#333;">Bachelor_with discount</div><div class="a" style="left:0;top:353.800px;width:1073px;height:35.380px;background:#f1f5f9;border-bottom:1px solid #ddd"></div><div class="a" style="left:5px;top:360.250px;width:35px;height:21px;border:1px solid #ccc;background:#fff"></div><svg style="left:10px;top:362.200px" width="14" height="14" viewBox="0 0 14 14"><path d="M6.20 0.95 L7.80 0.95 L8.72 2.84 L9.74 3.43 L11.84 3.29 L12.64 4.67 L11.46 6.41 L11.46 7.59 L12.64 9.33 L11.84 10.71 L9.74 10.57 L8.72 11.16 L7.80 13.05 L6.20 13.05 L5.28 11.16 L4.26 10.57 L2.16 10.71 L1.36 9.33 L2.54 7.59 L2.54 6.41 L1.36 4.67 L2.16 3.29 L4.26 3.43 L5.28 2.84 Z" fill="none" stroke="#3a3a3a" stroke-width="0.95" stroke-linejoin="round"/><circle cx="7" cy="7" r="2.1" fill="none" stroke="#3a3a3a" stroke-width="0.95"/></svg><svg style="left:26px;top:369.400px" width="8" height="4" viewBox="0 0 8 4"><path d="M0 0 H8 L4 4 Z" fill="#222"/></svg><svg style="left:50px;top:364.250px" width="14" height="14" viewBox="0 0 14 14"><rect width="14" height="14" rx="2.5" fill="#0b62e0"/><path d="M3.2 7.2 L5.8 9.8 L10.9 4.2" fill="none" stroke="#fff" stroke-width="2" stroke-linecap="round" stroke-linejoin="round"/></svg><div class="t" style="left:74.00px;top:363.800px;font-size:13px;line-height:13px;font-weight:400;color:#337ab7;">Curie, Marie</div><div class="t" style="left:201.50px;top:368.000px;font-size:10px;line-height:10px;font-weight:700;color:#111;">Eingeschrieben</div><svg style="left:306px;top:362.800px" width="16" height="16" viewBox="0 0 16 16"><g fill="none" stroke="#3a7dc0" stroke-width="1.3" stroke-linecap="round" stroke-linejoin="round"><path d="M9 1.6 V10 M5.6 6.6 L9 10 L12.4 6.6"/><path d="M5.8 9.6 H4.4 C3.5 9.6 2.9 10.2 2.9 11.1 V12.6 C2.9 13.5 3.5 14.1 4.4 14.1 H13.6 C14.5 14.1 15.1 13.5 15.1 12.6 V11.1 C15.1 10.2 14.5 9.6 13.6 9.6 H12.2"/></g></svg><div class="t" style="left:331.00px;top:363.800px;font-size:13px;line-height:13px;font-weight:400;color:#333;">011896-2024-000024</div><div class="badge" style="left:465px;top:364.800px;width:38px;background:#337ab7;line-height:16px">Offen</div><div class="badge" style="left:515px;top:364.800px;width:32px;background:#777;line-height:16px">EUR</div><div class="t" style="left:551.30px;top:363.800px;font-size:13px;line-height:13px;font-weight:400;color:#333;">49,00</div><div class="t" style="left:600.30px;top:363.800px;font-size:13px;line-height:13px;font-weight:400;color:#337ab7;">49,00</div><div class="t" style="left:685.20px;top:363.800px;font-size:13px;line-height:13px;font-weight:400;color:#333;">01.02.0002</div><div class="t" style="left:760.00px;top:363.800px;font-size:13px;line-height:13px;font-weight:400;color:#333;">BA GWT_WS24</div><svg style="left:864px;top:365.800px" width="10" height="10" viewBox="0 0 10 10"><path d="M1.5 1.5 L8.5 8.5 M8.5 1.5 L1.5 8.5" stroke="#333" stroke-width="1.15"/></svg><div class="t" style="left:959.50px;top:363.800px;font-size:13px;line-height:13px;font-weight:400;color:#333;">Bachelor_without discount</div><div class="a" style="left:0;top:389.180px;width:1073px;height:35.380px;background:#fff;border-bottom:1px solid #ddd"></div><div class="a" style="left:5px;top:395.630px;width:35px;height:21px;border:1px solid #ccc;background:#fff"></div><svg style="left:10px;top:397.580px" width="14" height="14" viewBox="0 0 14 14"><path d="M6.20 0.95 L7.80 0.95 L8.72 2.84 L9.74 3.43 L11.84 3.29 L12.64 4.67 L11.46 6.41 L11.46 7.59 L12.64 9.33 L11.84 10.71 L9.74 10.57 L8.72 11.16 L7.80 13.05 L6.20 13.05 L5.28 11.16 L4.26 10.57 L2.16 10.71 L1.36 9.33 L2.54 7.59 L2.54 6.41 L1.36 4.67 L2.16 3.29 L4.26 3.43 L5.28 2.84 Z" fill="none" stroke="#3a3a3a" stroke-width="0.95" stroke-linejoin="round"/><circle cx="7" cy="7" r="2.1" fill="none" stroke="#3a3a3a" stroke-width="0.95"/></svg><svg style="left:26px;top:404.780px" width="8" height="4" viewBox="0 0 8 4"><path d="M0 0 H8 L4 4 Z" fill="#222"/></svg><svg style="left:50px;top:399.630px" width="14" height="14" viewBox="0 0 14 14"><rect width="14" height="14" rx="2.5" fill="#0b62e0"/><path d="M3.2 7.2 L5.8 9.8 L10.9 4.2" fill="none" stroke="#fff" stroke-width="2" stroke-linecap="round" stroke-linejoin="round"/></svg><div class="t" style="left:74.00px;top:399.180px;font-size:13px;line-height:13px;font-weight:400;color:#337ab7;">Goodall, Jane</div><div class="t" style="left:201.50px;top:403.380px;font-size:10px;line-height:10px;font-weight:700;color:#111;">Eingeschrieben</div><svg style="left:306px;top:398.180px" width="16" height="16" viewBox="0 0 16 16"><g fill="none" stroke="#3a7dc0" stroke-width="1.3" stroke-linecap="round" stroke-linejoin="round"><path d="M9 1.6 V10 M5.6 6.6 L9 10 L12.4 6.6"/><path d="M5.8 9.6 H4.4 C3.5 9.6 2.9 10.2 2.9 11.1 V12.6 C2.9 13.5 3.5 14.1 4.4 14.1 H13.6 C14.5 14.1 15.1 13.5 15.1 12.6 V11.1 C15.1 10.2 14.5 9.6 13.6 9.6 H12.2"/></g></svg><div class="t" style="left:331.00px;top:399.180px;font-size:13px;line-height:13px;font-weight:400;color:#333;">011896-2024-000025</div><div class="badge" style="left:465px;top:400.180px;width:38px;background:#337ab7;line-height:16px">Offen</div><div class="badge" style="left:515px;top:400.180px;width:32px;background:#777;line-height:16px">EUR</div><div class="t" style="left:551.30px;top:399.180px;font-size:13px;line-height:13px;font-weight:400;color:#333;">49,00</div><div class="t" style="left:600.30px;top:399.180px;font-size:13px;line-height:13px;font-weight:400;color:#337ab7;">49,00</div><div class="t" style="left:685.20px;top:399.180px;font-size:13px;line-height:13px;font-weight:400;color:#333;">01.10.0001</div><div class="t" style="left:760.00px;top:399.180px;font-size:13px;line-height:13px;font-weight:400;color:#333;">BA GWT_WS24</div><svg style="left:864px;top:401.180px" width="10" height="10" viewBox="0 0 10 10"><path d="M1.5 1.5 L8.5 8.5 M8.5 1.5 L1.5 8.5" stroke="#333" stroke-width="1.15"/></svg><div class="t" style="left:959.50px;top:399.180px;font-size:13px;line-height:13px;font-weight:400;color:#333;">Bachelor_with discount</div><div class="a" style="left:0;top:424.560px;width:1073px;height:35.380px;background:#f1f5f9;border-bottom:1px solid #ddd"></div><div class="a" style="left:5px;top:431.010px;width:35px;height:21px;border:1px solid #ccc;background:#fff"></div><svg style="left:10px;top:432.960px" width="14" height="14" viewBox="0 0 14 14"><path d="M6.20 0.95 L7.80 0.95 L8.72 2.84 L9.74 3.43 L11.84 3.29 L12.64 4.67 L11.46 6.41 L11.46 7.59 L12.64 9.33 L11.84 10.71 L9.74 10.57 L8.72 11.16 L7.80 13.05 L6.20 13.05 L5.28 11.16 L4.26 10.57 L2.16 10.71 L1.36 9.33 L2.54 7.59 L2.54 6.41 L1.36 4.67 L2.16 3.29 L4.26 3.43 L5.28 2.84 Z" fill="none" stroke="#3a3a3a" stroke-width="0.95" stroke-linejoin="round"/><circle cx="7" cy="7" r="2.1" fill="none" stroke="#3a3a3a" stroke-width="0.95"/></svg><svg style="left:26px;top:440.160px" width="8" height="4" viewBox="0 0 8 4"><path d="M0 0 H8 L4 4 Z" fill="#222"/></svg><svg style="left:50px;top:435.010px" width="14" height="14" viewBox="0 0 14 14"><rect width="14" height="14" rx="2.5" fill="#0b62e0"/><path d="M3.2 7.2 L5.8 9.8 L10.9 4.2" fill="none" stroke="#fff" stroke-width="2" stroke-linecap="round" stroke-linejoin="round"/></svg><div class="t" style="left:74.00px;top:434.560px;font-size:13px;line-height:13px;font-weight:400;color:#337ab7;">Goodall, Jane</div><div class="t" style="left:201.50px;top:438.760px;font-size:10px;line-height:10px;font-weight:700;color:#111;">Eingeschrieben</div><svg style="left:306px;top:433.560px" width="16" height="16" viewBox="0 0 16 16"><g fill="none" stroke="#3a7dc0" stroke-width="1.3" stroke-linecap="round" stroke-linejoin="round"><path d="M9 1.6 V10 M5.6 6.6 L9 10 L12.4 6.6"/><path d="M5.8 9.6 H4.4 C3.5 9.6 2.9 10.2 2.9 11.1 V12.6 C2.9 13.5 3.5 14.1 4.4 14.1 H13.6 C14.5 14.1 15.1 13.5 15.1 12.6 V11.1 C15.1 10.2 14.5 9.6 13.6 9.6 H12.2"/></g></svg><div class="t" style="left:331.00px;top:434.560px;font-size:13px;line-height:13px;font-weight:400;color:#333;">011896-2024-000027</div><div class="badge" style="left:465px;top:435.560px;width:38px;background:#337ab7;line-height:16px">Offen</div><div class="badge" style="left:515px;top:435.560px;width:32px;background:#777;line-height:16px">EUR</div><div class="t" style="left:551.30px;top:434.560px;font-size:13px;line-height:13px;font-weight:400;color:#333;">49,00</div><div class="t" style="left:600.30px;top:434.560px;font-size:13px;line-height:13px;font-weight:400;color:#337ab7;">49,00</div><div class="t" style="left:685.20px;top:434.560px;font-size:13px;line-height:13px;font-weight:400;color:#333;">01.07.0001</div><div class="t" style="left:760.00px;top:434.560px;font-size:13px;line-height:13px;font-weight:400;color:#333;">BA GWT_WS24</div><svg style="left:864px;top:436.560px" width="10" height="10" viewBox="0 0 10 10"><path d="M1.5 1.5 L8.5 8.5 M8.5 1.5 L1.5 8.5" stroke="#333" stroke-width="1.15"/></svg><div class="t" style="left:959.50px;top:434.560px;font-size:13px;line-height:13px;font-weight:400;color:#333;">Bachelor_with discount</div><div class="a" style="left:0;top:459.940px;width:1073px;height:35.380px;background:#fff;border-bottom:1px solid #ddd"></div><div class="a" style="left:5px;top:466.390px;width:35px;height:21px;border:1px solid #ccc;background:#fff"></div><svg style="left:10px;top:468.340px" width="14" height="14" viewBox="0 0 14 14"><path d="M6.20 0.95 L7.80 0.95 L8.72 2.84 L9.74 3.43 L11.84 3.29 L12.64 4.67 L11.46 6.41 L11.46 7.59 L12.64 9.33 L11.84 10.71 L9.74 10.57 L8.72 11.16 L7.80 13.05 L6.20 13.05 L5.28 11.16 L4.26 10.57 L2.16 10.71 L1.36 9.33 L2.54 7.59 L2.54 6.41 L1.36 4.67 L2.16 3.29 L4.26 3.43 L5.28 2.84 Z" fill="none" stroke="#3a3a3a" stroke-width="0.95" stroke-linejoin="round"/><circle cx="7" cy="7" r="2.1" fill="none" stroke="#3a3a3a" stroke-width="0.95"/></svg><svg style="left:26px;top:475.540px" width="8" height="4" viewBox="0 0 8 4"><path d="M0 0 H8 L4 4 Z" fill="#222"/></svg><svg style="left:50px;top:470.390px" width="14" height="14" viewBox="0 0 14 14"><rect width="14" height="14" rx="2.5" fill="#0b62e0"/><path d="M3.2 7.2 L5.8 9.8 L10.9 4.2" fill="none" stroke="#fff" stroke-width="2" stroke-linecap="round" stroke-linejoin="round"/></svg><div class="t" style="left:74.00px;top:469.940px;font-size:13px;line-height:13px;font-weight:400;color:#337ab7;">Goodall, Jane</div><div class="t" style="left:201.50px;top:474.140px;font-size:10px;line-height:10px;font-weight:700;color:#111;">Eingeschrieben</div><svg style="left:306px;top:468.940px" width="16" height="16" viewBox="0 0 16 16"><g fill="none" stroke="#3a7dc0" stroke-width="1.3" stroke-linecap="round" stroke-linejoin="round"><path d="M9 1.6 V10 M5.6 6.6 L9 10 L12.4 6.6"/><path d="M5.8 9.6 H4.4 C3.5 9.6 2.9 10.2 2.9 11.1 V12.6 C2.9 13.5 3.5 14.1 4.4 14.1 H13.6 C14.5 14.1 15.1 13.5 15.1 12.6 V11.1 C15.1 10.2 14.5 9.6 13.6 9.6 H12.2"/></g></svg><div class="t" style="left:331.00px;top:469.940px;font-size:13px;line-height:13px;font-weight:400;color:#333;">011896-2024-000028</div><div class="badge" style="left:465px;top:470.940px;width:38px;background:#337ab7;line-height:16px">Offen</div><div class="badge" style="left:515px;top:470.940px;width:32px;background:#777;line-height:16px">EUR</div><div class="t" style="left:551.30px;top:469.940px;font-size:13px;line-height:13px;font-weight:400;color:#333;">49,00</div><div class="t" style="left:600.30px;top:469.940px;font-size:13px;line-height:13px;font-weight:400;color:#337ab7;">49,00</div><div class="t" style="left:685.20px;top:469.940px;font-size:13px;line-height:13px;font-weight:400;color:#333;">01.06.0001</div><div class="t" style="left:760.00px;top:469.940px;font-size:13px;line-height:13px;font-weight:400;color:#333;">BA GWT_WS24</div><svg style="left:864px;top:471.940px" width="10" height="10" viewBox="0 0 10 10"><path d="M1.5 1.5 L8.5 8.5 M8.5 1.5 L1.5 8.5" stroke="#333" stroke-width="1.15"/></svg><div class="t" style="left:959.50px;top:469.940px;font-size:13px;line-height:13px;font-weight:400;color:#333;">Bachelor_with discount</div></div><div class="a" style="left:205px;top:176px;width:160px;height:61px;background:#fff;border:1px solid rgba(0,0,0,.15);border-radius:0 0 1px 1px;box-shadow:0 6px 12px rgba(0,0,0,.175)"></div><div class="t" style="left:226.30px;top:188.00px;font-size:13px;line-height:13px;font-weight:400;color:#333;">nur Auswahl</div><div class="t" style="left:226.30px;top:212.00px;font-size:13px;line-height:13px;font-weight:400;color:#333;">alle Filterergebnisse</div><div class="a" style="left:0;top:859px;width:123px;height:1px;background:#dcdcdc"></div></div></body></html>
